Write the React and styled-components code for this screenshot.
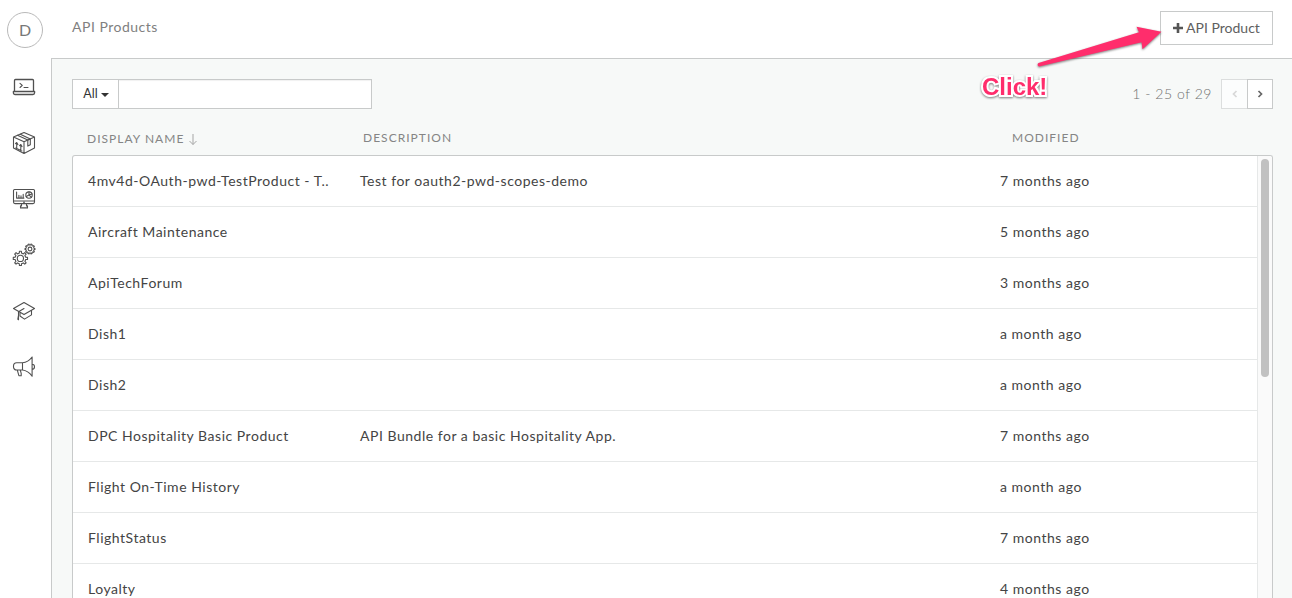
import React from "react";
import styled, { createGlobalStyle } from "styled-components";

const GlobalStyle = createGlobalStyle`
  * { box-sizing: border-box; }
  html, body { margin: 0; height: 100%; overflow: hidden; }
  body { background: #fff; font-family: Lato, "Open Sans", sans-serif; color: #444; }
  button, input { font-family: inherit; border-radius: 0; margin: 0; }
`;

const Page = styled.div`
  position: relative;
  display: flex;
  height: 598px;
  width: 1292px;
  overflow: hidden;
`;

const Sidebar = styled.nav`
  width: 51px;
  flex: none;
  display: flex;
  flex-direction: column;
  padding: 12px 0 0 7px;
`;

const Avatar = styled.div`
  width: 36px;
  height: 36px;
  border: 1px solid #b9b9b9;
  border-radius: 50%;
  display: flex;
  align-items: center;
  justify-content: center;
  padding-bottom: 2px;
  font-size: 16px;
  color: #777;
  margin-bottom: 27px;
`;

const NavItem = styled.a`
  width: 34px;
  height: 24px;
  margin-bottom: 32px;
  display: flex;
  justify-content: center;
  svg {
    width: 24px;
    height: 24px;
    fill: none;
    stroke: #505050;
    stroke-width: 1.1;
    stroke-linejoin: round;
    stroke-linecap: round;
  }
`;

const Main = styled.div`
  flex: 1;
  display: flex;
  flex-direction: column;
  min-width: 0;
`;

const TopBar = styled.header`
  height: 58px;
  flex: none;
  padding: 11px 19px 0 21px;
  display: flex;
  justify-content: space-between;
`;

const Title = styled.h1`
  margin: 0;
  padding-top: 7px;
  font-size: 14px;
  line-height: 17px;
  font-weight: 400;
  letter-spacing: 0.5px;
  color: #808080;
`;

const AddButton = styled.button`
  width: 113px;
  height: 34px;
  padding: 0 0 2px;
  background: #fff;
  border: 1px solid #c8caca;
  display: flex;
  align-items: center;
  justify-content: center;
  gap: 3px;
  font-size: 14px;
  color: #606060;
  svg { fill: #555; margin-top: 2px; }
`;

const Content = styled.main`
  flex: 1;
  min-height: 0;
  background: #f7f9f8;
  border-top: 1px solid #c8caca;
  border-left: 1px solid #c8caca;
  padding: 20px 19px 0 20px;
  display: flex;
  flex-direction: column;
`;

const Toolbar = styled.div`
  display: flex;
  justify-content: space-between;
  height: 30px;
  flex: none;
`;

const Search = styled.div`
  display: flex;
  width: 300px;
`;

const FilterButton = styled.button`
  width: 47px;
  padding: 0 0 1px 1px;
  border: 1px solid #c8caca;
  background: #fff;
  display: flex;
  align-items: center;
  justify-content: center;
  gap: 3px;
  font-size: 12.5px;
  color: #333;
`;

const Caret = styled.span`
  border: 4px solid transparent;
  border-top-color: #333;
  border-bottom: 0;
  margin-top: 3px;
`;

const SearchInput = styled.input`
  flex: 1;
  min-width: 0;
  border: 1px solid #c8caca;
  border-left: 0;
  background: #fff;
  box-shadow: inset 0 1px 1px rgba(0, 0, 0, 0.06);
  outline: none;
`;

const Pager = styled.div`
  display: flex;
`;

const PageRange = styled.span`
  font-size: 14px;
  line-height: 29px;
  letter-spacing: 0.55px;
  font-weight: 300;
  color: #707070;
  margin-right: 9px;
`;

const PageButton = styled.button`
  width: 26px;
  height: 30px;
  padding: 0;
  border: 1px solid ${(p) => (p.$off ? "#dcdede" : "#c8caca")};
  border-right-width: ${(p) => (p.$off ? 0 : 1)}px;
  background: ${(p) => (p.$off ? "#fcfdfd" : "#fff")};
  display: flex;
  align-items: center;
  justify-content: center;
  svg { fill: none; stroke: ${(p) => (p.$off ? "#d8d8d8" : "#666")}; stroke-width: 1.7; }
`;

const HeadRow = styled.div`
  display: flex;
  height: 46px;
  flex: none;
  padding: 21px 0 0 15px;
  font-size: 12px;
  line-height: 16px;
  letter-spacing: 1.02px;
  color: #858585;
`;

const HeadCell = styled.div`
  flex: none;
  width: ${(p) => p.$w}px;
  padding-top: ${(p) => (p.$sorted ? 1 : 0)}px;
  display: flex;
  gap: 5px;
  align-items: center;
  height: ${(p) => (p.$sorted ? 17 : 16)}px;
  svg { fill: none; stroke: #a5a5a5; }
`;

const Table = styled.div`
  flex: 1;
  min-height: 0;
  display: flex;
  background: #fff;
  border: 1px solid #c8caca;
  border-bottom: 0;
  border-radius: 3px 3px 0 0;
  overflow: hidden;
`;

const Rows = styled.div`
  flex: 1;
`;

const Row = styled.div`
  display: flex;
  height: 51px;
  padding-left: 15px;
  border-bottom: 1px solid #e6e8e8;
  font-size: 14px;
  line-height: 49px;
  letter-spacing: 0.52px;
  color: #444;
`;

const Cell = styled.div`
  flex: none;
  width: ${(p) => p.$w}px;
  white-space: nowrap;
`;

const ScrollTrack = styled.div`
  width: 15px;
  background: #fafafa;
  border-left: 1px solid #e6e8e8;
  padding: 3px 3px 0;
`;

const ScrollThumb = styled.div`
  width: 8px;
  height: 218px;
  border-radius: 4px;
  background: #c1c1c1;
`;

const Arrow = styled.svg`
  position: absolute;
  left: 1030px;
  top: 20px;
  filter: drop-shadow(0 1px 1px rgba(0, 0, 0, 0.5));
`;

const Callout = styled.div`
  position: absolute;
  left: 982px;
  top: 73px;
  font: 700 24px/28px "Liberation Sans", Arial, sans-serif;
  color: #ff2d6c;
  -webkit-text-stroke: 4px #fff;
  paint-order: stroke fill;
  filter: drop-shadow(0 1px 1px rgba(0, 0, 0, 0.5));
`;

const toothedRing = (cx, cy, r, R, n) => {
  const pts = [];
  for (let i = 0; i < n; i += 1) {
    const a = (i / n) * Math.PI * 2;
    const h = Math.PI / n;
    [[-0.52, r], [-0.35, R], [0.35, R], [0.52, r]].forEach(([k, q]) => {
      pts.push(`${(cx + q * Math.cos(a + k * h)).toFixed(2)},${(cy + q * Math.sin(a + k * h)).toFixed(2)}`);
    });
  }
  return pts.join(" ");
};

const LaptopIcon = () => (
  <svg viewBox="0 0 24 24">
    <path d="M2.5 16V5.500a1 1 0 0 1 1-1h17a1 1 0 0 1 1 1V16M1.400 16.500h21.200v1.300a1.700 1.700 0 0 1-1.700 1.700H3.100a1.700 1.700 0 0 1-1.700-1.700z" strokeWidth="1.3" />
    <path d="M8 8.300 10.300 10.400 8 12.500M12 12.500h4" />
  </svg>
);
const BoxIcon = () => (
  <svg viewBox="0 0 24 24" strokeWidth="1">
    <path d="M12 1.500 22.500 6v11L12 22.500 1.500 17V6zM1.500 6 12 10.800 22.500 6M12 10.800v11.700" />
    <path d="m5.500 4.300 10.300 4.800v6l2.500-1.300V7.900L8.300 3.200M15.800 9.100l2.500-1.200" />
    <path d="M4.700 17.500v-6m-1.200 1.100 1.200-1.100 1.200 2.100M8.800 19.500v-6m-1.200 1.200 1.200-1.200 1.200 2.100M3.700 17l6.200 3" />
  </svg>
);
const MonitorIcon = () => (
  <svg viewBox="0 0.6 24 24">
    <path d="M2.500 3.100h19a1 1 0 0 1 1 1v11.600a1.500 1.500 0 0 1-1.500 1.500H3a1.500 1.500 0 0 1-1.500-1.500V4.100a1 1 0 0 1 1-1zM1.500 14.600h21M9.500 17.200v2.300h-1v2h7v-2h-1v-2.300M11.500 15.900h1" />
    <path d="M4.600 5.700v6h7.300M6.900 8.800v2.500M9 9.500v2M11.200 8v3.300" />
    <circle cx="17" cy="8.700" r="3.200" />
    <path d="M17 5.500v3.200l2.900-1M17 8.700l-2.700 1.500M17 8.700l2.400 2" />
  </svg>
);
const GearsIcon = () => (
  <svg viewBox="0 0 24 24">
    <polygon points={toothedRing(8.4, 15.4, 5.4, 7.2, 8)} />
    <circle cx="8.400" cy="15.400" r="3.100" />
    <polygon points={toothedRing(18, 6, 4.1, 5, 10)} />
    <circle cx="18" cy="6" r="1.900" />
  </svg>
);
const CapIcon = () => (
  <svg viewBox="0 0 24 24">
    <path d="m12 3.500 10.500 6L12 15.600 1.500 9.500zM12 9.500l-5.500 3.200v8M6.500 12.700v3.600l-.7 4M8 14v3l4.500 3.100 7-4.200v-4.500" />
  </svg>
);
const HornIcon = () => (
  <svg viewBox="0 0.8 24 24">
    <path d="M10.500 8.600c4.500-.4 7.200-2.600 9.600-5.800v19.200c-2.400-3.300-5.100-5.700-9.600-6.200H4.700c-4.300 0-4.300-7.200 0-7.200zM10.500 8.600v7.200M20.100 10c3.200 0 3.200 5.200 0 5.200M5.300 15.900l1.600 5.600h2.300v-2.300l-.9-3.300" />
  </svg>
);

const navIcons = [LaptopIcon, BoxIcon, MonitorIcon, GearsIcon, CapIcon, HornIcon];

const products = [
  ["4mv4d-OAuth-pwd-TestProduct - T..", "Test for oauth2-pwd-scopes-demo", "7 months ago"],
  ["Aircraft Maintenance", "", "5 months ago"],
  ["ApiTechForum", "", "3 months ago"],
  ["Dish1", "", "a month ago"],
  ["Dish2", "", "a month ago"],
  ["DPC Hospitality Basic Product", "API Bundle for a basic Hospitality App.", "7 months ago"],
  ["Flight On-Time History", "", "a month ago"],
  ["FlightStatus", "", "7 months ago"],
  ["Loyalty", "", "4 months ago"],
];

export default function App() {
  return (
    <>
      <GlobalStyle />
      <Page>
        <Sidebar>
          <Avatar>D</Avatar>
          {navIcons.map((Icon, i) => (
            <NavItem key={i}><Icon /></NavItem>
          ))}
        </Sidebar>
        <Main>
          <TopBar>
            <Title>API Products</Title>
            <AddButton>
              <svg width="10" height="10" viewBox="0 0 10 10"><path d="M3.700 0h2.600v3.700H10v2.600H6.300V10H3.700V6.300H0V3.700h3.700z" /></svg>
              API Product
            </AddButton>
          </TopBar>
          <Content>
            <Toolbar>
              <Search>
                <FilterButton>All<Caret /></FilterButton>
                <SearchInput />
              </Search>
              <Pager>
                <PageRange>1 - 25 of 29</PageRange>
                <PageButton $off>
                  <svg width="6" height="8" viewBox="0 0 6 8"><path d="M4.500 1 1.500 4l3 3" /></svg>
                </PageButton>
                <PageButton>
                  <svg width="6" height="8" viewBox="0 0 6 8"><path d="m1.500 1 3 3-3 3" /></svg>
                </PageButton>
              </Pager>
            </Toolbar>
            <HeadRow>
              <HeadCell $w={276} $sorted>
                DISPLAY NAME
                <svg width="8" height="11" viewBox="0 0 8 11"><path d="M4 0v10.500M.5 7 4 10.500 7.500 7" /></svg>
              </HeadCell>
              <HeadCell $w={649}>DESCRIPTION</HeadCell>
              <HeadCell $w={120}>MODIFIED</HeadCell>
            </HeadRow>
            <Table>
              <Rows>
                {products.map(([name, description, modified]) => (
                  <Row key={name}>
                    <Cell $w={272}>{name}</Cell>
                    <Cell $w={640}>{description}</Cell>
                    <Cell $w={200}>{modified}</Cell>
                  </Row>
                ))}
              </Rows>
              <ScrollTrack><ScrollThumb /></ScrollTrack>
            </Table>
          </Content>
        </Main>
        <Arrow width="134" height="50" viewBox="0 0 134 50">
          <path d="M8.500 43 109 12.300 106.500 6.800 131.500 11.800 112.500 29.200 111.500 22.300 9 46.500Q6.500 45 8.500 43z" fill="#ff2d6c" />
        </Arrow>
        <Callout>Click!</Callout>
      </Page>
    </>
  );
}
